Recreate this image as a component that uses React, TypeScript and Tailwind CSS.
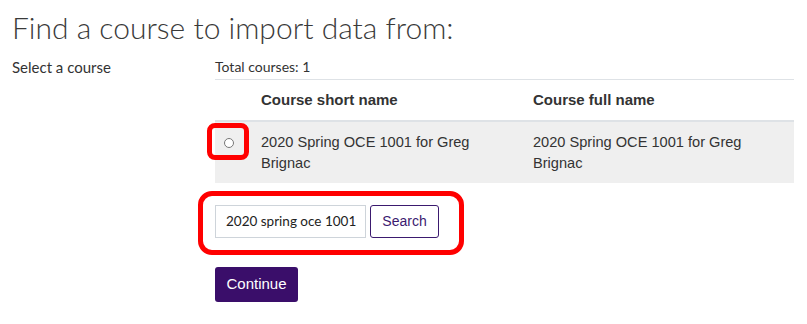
import React from "react";

export default function App() {
  return (
    <div className="w-[807px] h-[324px] bg-white overflow-hidden text-[#333]">
      <h1 className="pl-[12px] pt-[9px] text-[30px] leading-[36px] font-light text-[#3a3a3a] [font-family:Lato,'Open_Sans',sans-serif]">
        Find a course to import data from:
      </h1>
      <div className="flex pt-[13px]">
        <div className="w-[215px] pl-[12px] text-[15px] leading-[18px] text-[#333] [font-family:Lato,sans-serif]">
          Select a course
        </div>
        <div className="w-[579px]">
          <div className="text-[14px] leading-[18px] pb-[3px] border-b border-[#dee2e6] [font-family:Lato,sans-serif]">
            Total courses: 1
          </div>
          <table className="w-full border-collapse [font-family:'Liberation_Sans',Arial,sans-serif] text-[14.6px] text-[#333]">
            <thead>
              <tr className="border-b-2 border-[#dee2e6]">
                <th className="w-[34px]"></th>
                <th className="w-[272px] text-left font-bold pl-[12px] h-[41px] align-middle text-[15px]">Course short name</th>
                <th className="text-left font-bold pl-[12px] align-middle text-[15px]">Course full name</th>
              </tr>
            </thead>
            <tbody>
              <tr className="bg-[#efefef]">
                <td className="relative align-top pl-[9px] pt-[16px]">
                  <div className="w-[10px] h-[10px] rounded-full border border-[#777] bg-white"></div>
                  <div className="absolute left-[-8px] top-[1px] w-[42px] h-[37px] border-[5px] border-[#ff0000] rounded-[8px]"></div>
                </td>
                <td className="pl-[12px] pr-[40px] pt-[10px] pb-[9px] leading-[21px] align-top">
                  2020 Spring OCE 1001 for Greg Brignac
                </td>
                <td className="pl-[12px] pr-[40px] pt-[10px] pb-[9px] leading-[21px] align-top">
                  2020 Spring OCE 1001 for Greg Brignac
                </td>
              </tr>
            </tbody>
          </table>
          <div className="relative mt-[22px] flex gap-[4px] items-center">
            <div className="w-[151px] h-[33px] border border-[#ced4da] flex items-center pl-[10px] text-[13.5px] text-[#222] [font-family:Lato,sans-serif]">
              2020 spring oce 1001
            </div>
            <div className="w-[69px] h-[33px] border border-[#3b1a6f] rounded-[3px] flex items-center justify-center text-[14px] text-[#3b1a6f] [font-family:'Liberation_Sans',Arial,sans-serif]">
              Search
            </div>
            <div className="absolute left-[-17px] top-[-14px] w-[266px] h-[64px] border-[5px] border-[#ff0000] rounded-[14px]"></div>
          </div>
          <div className="mt-[29px] w-[83px] h-[35px] rounded-[3px] bg-[#3a0e6a] text-white flex items-center justify-center text-[15px] [font-family:'Liberation_Sans',Arial,sans-serif]">
            Continue
          </div>
        </div>
      </div>
    </div>
  );
}
